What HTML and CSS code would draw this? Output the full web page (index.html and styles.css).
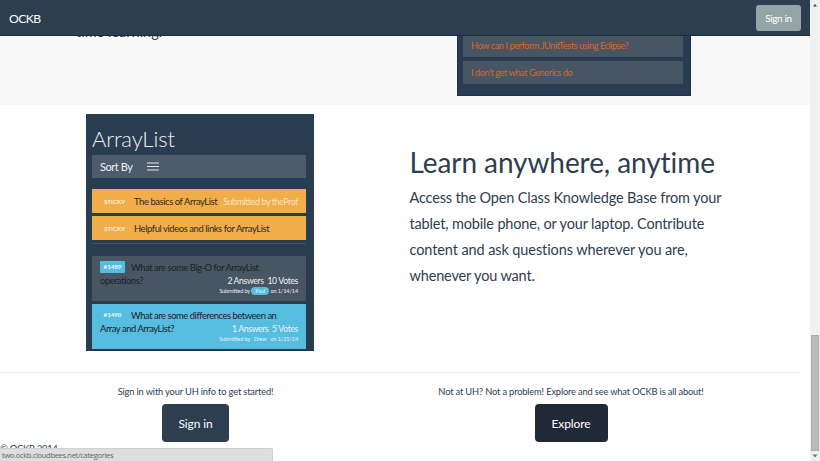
FILE: index.html
```html
<!DOCTYPE html>
<html lang="en">
<head>
<meta charset="utf-8">
<title>OCKB</title>
<link rel="stylesheet" href="styles.css">
</head>
<body>
<div class="page">
  <header class="navbar"><span class="brand">OCKB</span><span class="nav-btn">Sign in</span></header>
  <section class="previous">
    <p class="previous-text">time learning.</p>
    <div class="question-panel">
      <div class="question first">How can I perform JUnitTests using Eclipse?</div>
      <div class="question">I don't get what Generics do</div>
    </div>
  </section>
  <section class="feature">
    <div class="card">
      <h3 class="card-title">ArrayList</h3>
      <div class="sort"><span>Sort By</span>
        <svg width="12" height="9" viewBox="0 0 12 9"><path d="M0 1h12M0 4.5h12M0 8h12" stroke="#e6eaed" stroke-width="1.2"/></svg>
      </div>
      <div class="sticky"><b class="tag">STICKY</b><span>The basics of ArrayList</span><span class="by">Submitted by theProf</span></div>
      <div class="sticky"><b class="tag">STICKY</b><span>Helpful videos and links for ArrayList</span></div>
      <div class="rule"></div>
      <div class="post">
        <div class="line"><b class="num badge">#1489</b><span>What are some Big-O for ArrayList</span></div>
        <div class="line second"><span>operations?</span><span class="votes">2 Answers&nbsp; 10 Votes</span></div>
        <div class="meta">Submitted by <span class="user pill">Paul</span> on 1/14/14</div>
      </div>
      <div class="post blue">
        <div class="line"><b class="num">#1490</b><span>What are some differences between an</span></div>
        <div class="line second"><span>Array and ArrayList?</span><span class="votes">1 Answers&nbsp; 5 Votes</span></div>
        <div class="meta">Submitted by <span class="user">Drew</span> on 1/15/14</div>
      </div>
    </div>
    <div class="copy">
      <h2>Learn anywhere, anytime</h2>
      <p>Access the Open Class Knowledge Base from your<br>tablet, mobile phone, or your laptop. Contribute<br><span class="wide">content and ask questions wherever you are,</span><br>whenever you want.</p>
    </div>
  </section>
  <section class="actions">
    <div class="action left"><p>Sign in with your UH info to get started!</p><span class="btn signin">Sign in</span></div>
    <div class="action right"><p>Not at UH? Not a problem! Explore and see what OCKB is all about!</p><span class="btn explore">Explore</span></div>
  </section>
  <footer>© OCKB 2014</footer>
</div>
<div class="scrollbar">
  <svg class="arrow" width="10" height="8" viewBox="0 0 10 8"><path d="M3 6.5L5 4L7 6.5z" fill="#444"/></svg>
  <div class="thumb"></div>
  <svg class="arrow" width="10" height="8" viewBox="0 0 10 8"><path d="M2.5 1.5h5L5 4.5z" fill="#777"/></svg>
</div>
<div class="status">two.ockb.cloudbees.net/categories</div>
</body>
</html>
```
FILE: styles.css
```css
* { box-sizing: border-box; }
html, body { margin: 0; height: 461px; overflow: hidden; }
body { display: flex; background: #fff; font-family: Lato, sans-serif; color: #2c3e50; font-variant-ligatures: none; }
h2, h3, p { margin: 0; font-weight: 400; }
span, b { white-space: nowrap; }
.page { width: 810px; height: 461px; flex: none; }
.navbar { height: 36px; background: #2c3e50; border-bottom: 1px solid #1a2c3e; display: flex; justify-content: space-between; padding: 5px 9px 0; color: #fff; position: relative; z-index: 1; }
.brand { font-size: 12.2px; line-height: 27px; letter-spacing: -0.6px; }
.nav-btn { width: 45px; height: 26px; border-radius: 3px; background: #95a5a6; font-size: 10px; line-height: 26px; text-align: center; letter-spacing: -0.4px; }
.previous { height: 69px; background: #f8f8f8; display: flex; }
.previous-text { width: 381px; margin-left: 76px; margin-top: -17px; font-size: 14.5px; line-height: 26px; height: 26px; }
.question-panel { width: 234px; height: 60px; background: #293d52; border: 1px solid #1d3147; border-top: 0; padding: 0 7px 0 5px; }
.question { height: 23px; line-height: 23px; margin-top: 4px; padding-left: 8px; background: #485563; color: #d4682c; font-size: 9.3px; white-space: nowrap; letter-spacing: -0.48px; }
.question.first { height: 21px; line-height: 19px; margin-top: 0; }
.feature { height: 267px; display: flex; padding: 9px 0 0 86px; }
.card { width: 228px; height: 237px; background: #293d51; padding: 12px 8px 0 6px; border: 1px solid #21354a; border-width: 0 0 1px; color: #edf0f2; }
.card-title { font-size: 22px; font-weight: 300; line-height: 26px; height: 29px; letter-spacing: -0.1px; }
.sort { height: 23px; background: #4d5b6a; display: flex; align-items: center; padding-left: 8px; gap: 15px; font-size: 11px; letter-spacing: -0.45px; margin-bottom: 11px; }
.sticky { height: 24px; margin-bottom: 3px; background: #f0ad4a; display: flex; align-items: center; font-size: 9.4px; letter-spacing: -0.4px; color: #2f2a20; padding: 0 8px 0 12px; }
.tag { width: 30px; color: #fff0d6; font-size: 6.4px; letter-spacing: -0.15px; flex: none; }
.by { margin-left: auto; color: #fae4c0; font-size: 9px; letter-spacing: -0.46px; }
.rule { height: 1px; background: #405264; margin-bottom: 12px; }
.post { height: 45px; background: #485563; padding: 5px 8px 0; color: #1b2126; margin-bottom: 3px; }
.line { display: flex; height: 13px; line-height: 13px; font-size: 9.4px; letter-spacing: -0.44px; }
.num { width: 25px; height: 12px; line-height: 12px; margin-right: 6px; text-align: center; color: #e7f8fd; font-size: 6.3px; letter-spacing: -0.1px; border-radius: 1px; flex: none; }
.badge { background: #55bde0; }
.second { justify-content: space-between; }
.votes { color: #edf2f4; font-size: 8.7px; letter-spacing: -0.37px; }
.meta { text-align: right; font-size: 5.6px; line-height: 8px; color: #e8edf0; white-space: nowrap; letter-spacing: -0.15px; }
.user { display: inline-block; width: 18px; text-align: center; border-radius: 5px; }
.pill { background: #55bde0; }
.blue { background: #56bde0; margin: 0; }
.copy { margin-left: 95.5px; padding-top: 30px; white-space: nowrap; }
.copy h2 { font-size: 28px; line-height: 36px; height: 41px; letter-spacing: -0.08px; }
.copy p { font-size: 14.5px; line-height: 26px; letter-spacing: -0.16px; }
.copy .wide { letter-spacing: -0.1px; }
.actions { width: 801px; height: 70px; border-top: 1px solid #edf0f0; display: flex; }
.action { display: flex; flex-direction: column; align-items: center; padding-top: 12px; font-size: 9.3px; }
.left { width: 391px; }
.right { width: 360px; }
.action p { line-height: 14px; height: 20px; white-space: nowrap; letter-spacing: -0.16px; }
.btn { height: 38px; line-height: 39px; border-radius: 4px; color: #fff; font-size: 12px; text-align: center; flex: none; letter-spacing: -0.12px; }
.signin { width: 67px; background: #2c3e50; }
.explore { width: 73px; background: #1f2a36; }
footer { font-size: 9.3px; line-height: 14px; letter-spacing: -0.2px; }
.scrollbar { width: 10px; height: 461px; background: #f0f0f0; display: flex; flex-direction: column; justify-content: space-between; }
.arrow { flex: none; }
.thumb { width: 8px; height: 116px; margin: 327px 1px 2px; background: #bababa; border: 1px solid #adadad; }
.status { position: absolute; left: 0; bottom: 0; width: 273px; height: 13px; background: #dedede; border-top: 1px solid #d0d0d0; border-right: 1px solid #d0d0d0; border-top-right-radius: 2px; font: 7.6px/12px "Open Sans", sans-serif; letter-spacing: -0.36px; color: #666; padding-left: 2px; z-index: 2; }
```
